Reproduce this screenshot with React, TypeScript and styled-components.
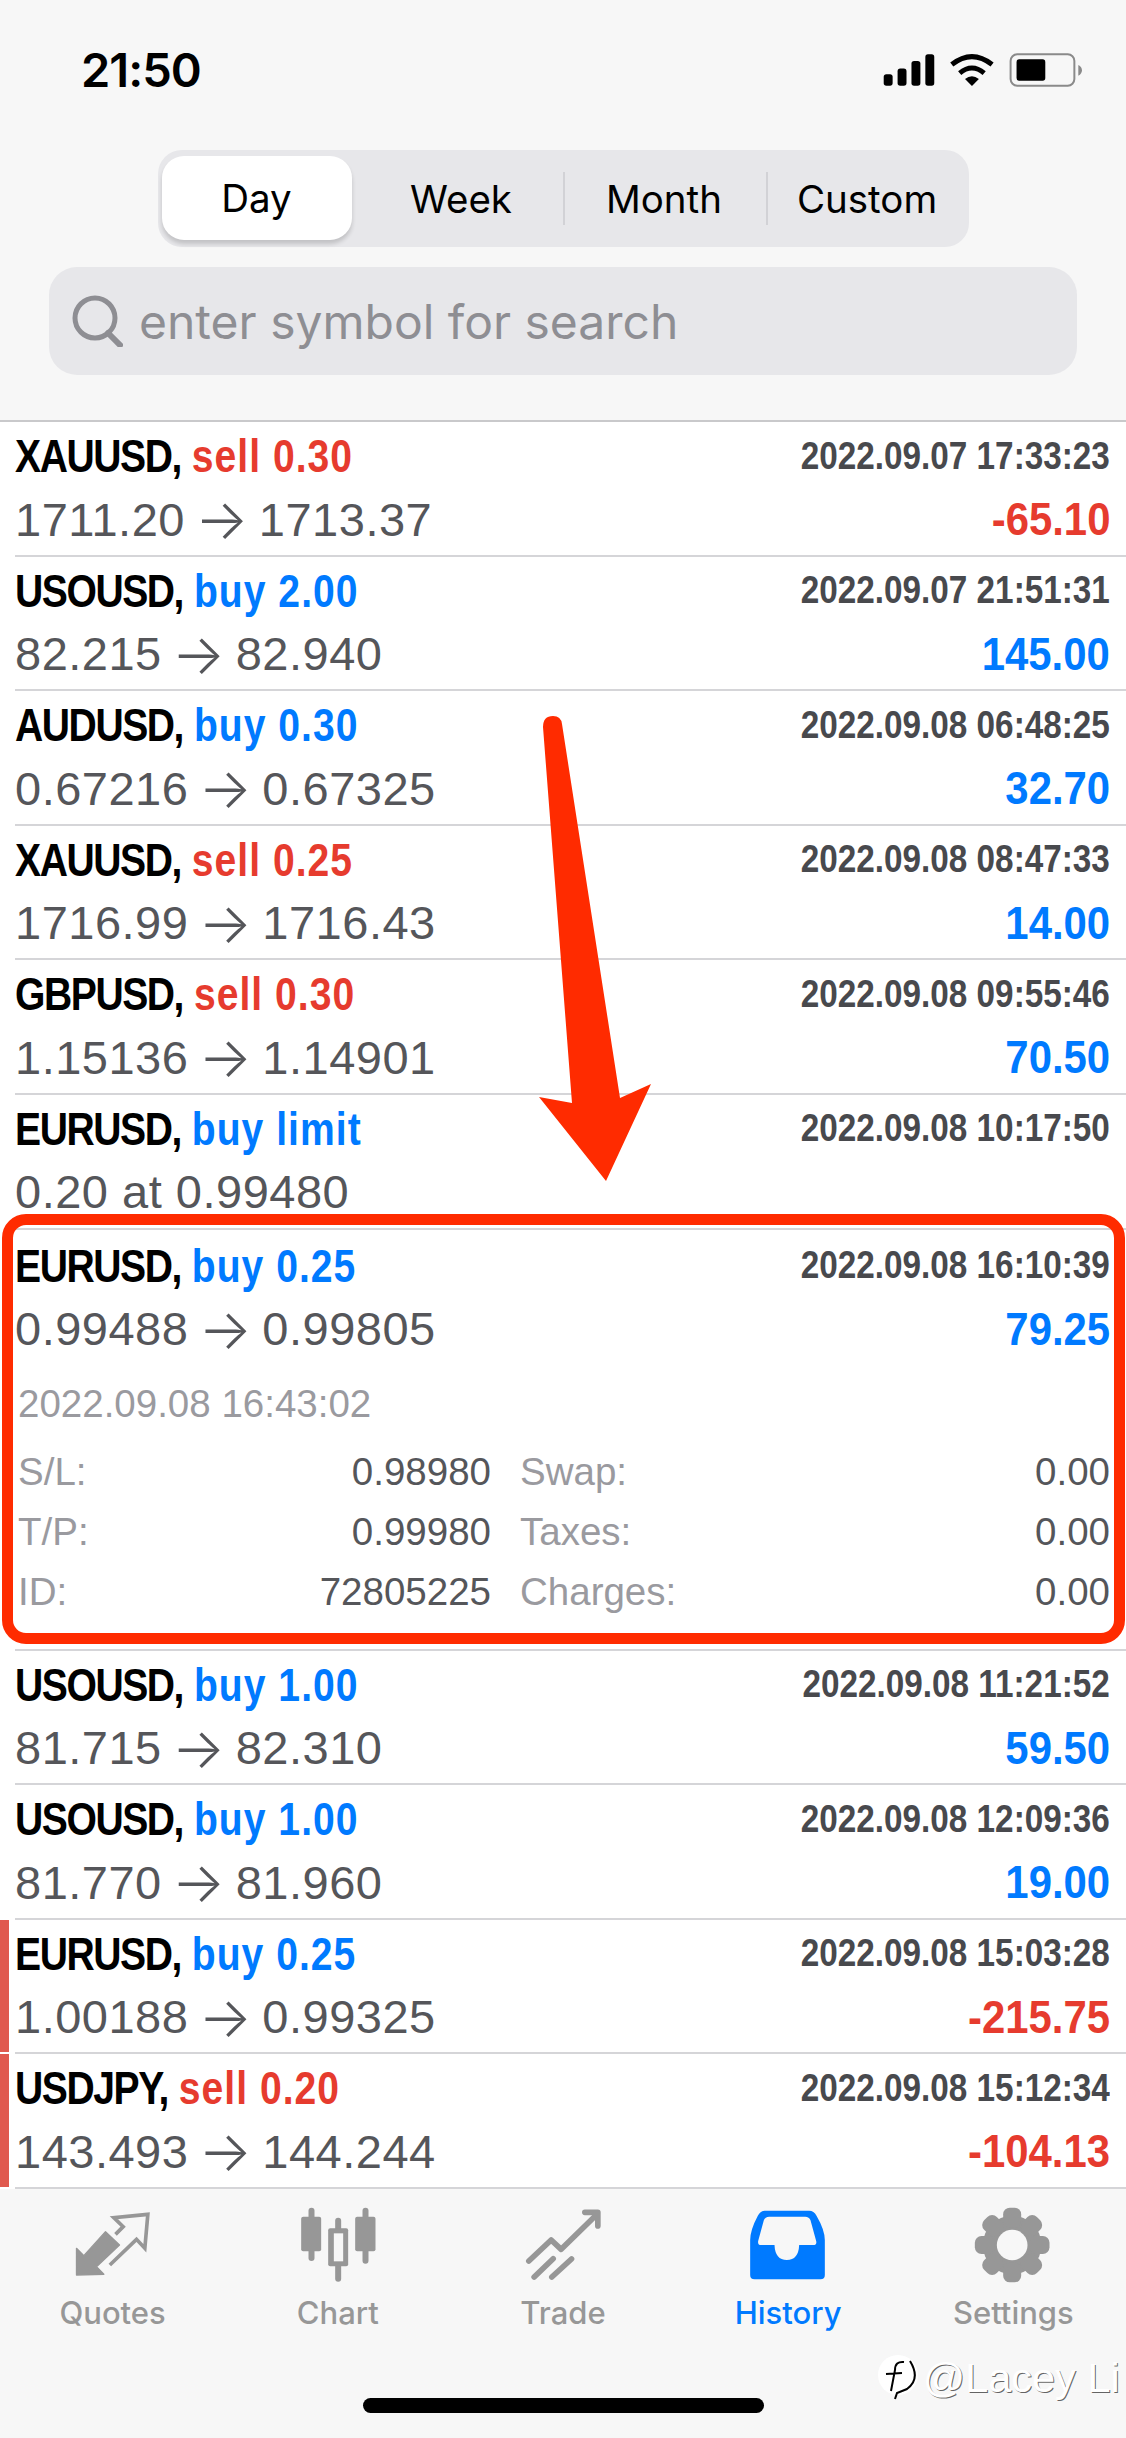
import React from "react";
import styled, { createGlobalStyle } from "styled-components";

const GlobalStyle = createGlobalStyle`
    html, body {
        margin: 0;
        padding: 0;
        background: #f7f7f7;
    }
    * {
        box-sizing: border-box;
    }
`

const Page = styled.div`
    position: relative;
    width: 1126px;
    height: 2438px;
    overflow: hidden;
    background: #f7f7f7;
    font-family: "Liberation Sans", Arial, sans-serif;
`

const Header = styled.header`
    height: 422px;
    border-bottom: 2px solid #c9c9cb;
    display: flex;
    flex-direction: column;
    align-items: center;
`

const StatusBar = styled.div`
    width: 100%;
    height: 139px;
    margin-bottom: 11px;
    padding: 0 39px 0 81px;
    display: flex;
    align-items: center;
    justify-content: space-between;
`

const Clock = styled.span`
    font-family: Inter, sans-serif;
    font-size: 47px;
    font-weight: 600;
    letter-spacing: -1px;
    color: #000;
`

const Segmented = styled.div`
    width: 811px;
    height: 97px;
    display: flex;
    background: #e7e7ea;
    border-radius: 24px;
`

const Segment = styled.div<{ $active?: boolean; $divider?: boolean }>`
    position: relative;
    flex: ${p => (p.$active ? "0 0 190px" : "1")};
    display: flex;
    align-items: center;
    justify-content: center;
    font-family: Inter, sans-serif;
    font-size: 38.5px;
    color: #000;
    margin: ${p => (p.$active ? "6px 8px 7px 4px" : "0")};
    background: ${p => (p.$active ? "#fff" : "transparent")};
    border-radius: 22px;
    box-shadow: ${p => (p.$active ? "0 4px 4px rgba(0,0,0,0.16)" : "none")};

    &::before {
        content: "";
        display: ${p => (p.$divider ? "block" : "none")};
        position: absolute;
        left: 0;
        top: 22px;
        height: 53px;
        width: 2px;
        background: #d2d2d6;
    }
`

const SearchBox = styled.div`
    width: 1028px;
    height: 108px;
    margin-top: 20px;
    padding-left: 22px;
    display: flex;
    align-items: center;
    gap: 16px;
    background: #e7e7ea;
    border-radius: 28px;
`

const SearchText = styled.span`
    font-family: Inter, sans-serif;
    font-size: 48px;
    color: #8e8e93;
`

const List = styled.div`
    background: #fff;
`

const Row = styled.div<{ $expanded?: boolean }>`
    display: flex;
    height: ${p => (p.$expanded ? "421px" : "134.6px")};
`

const Accent = styled.div<{ $on?: boolean }>`
    width: 9px;
    flex-shrink: 0;
    background: ${p => (p.$on ? "#e0594e" : "transparent")};
    border-bottom: 2px solid ${p => (p.$on ? "#fff" : "transparent")};
`

const RowBody = styled.div`
    flex: 1;
    margin-left: 6px;
    padding-right: 16px;
    border-bottom: 2px solid #d5d5d8;
`

const TopLine = styled.div<{ $expanded?: boolean }>`
    height: ${p => (p.$expanded ? "72px" : "68px")};
    display: flex;
    align-items: center;
    justify-content: space-between;
`

const SubLine = styled.div<{ $expanded?: boolean }>`
    height: 58px;
    margin-top: ${p => (p.$expanded ? "-2px" : "0")};
    display: flex;
    align-items: center;
    justify-content: space-between;
`

const Title = styled.div`
    font-size: 46px;
    font-weight: 700;
    white-space: nowrap;
    transform: scaleX(0.85);
    transform-origin: left center;
`

const Symbol = styled.span`
    color: #000;
    letter-spacing: -1.7px;
`

const Action = styled.span<{ $side: "buy" | "sell" }>`
    letter-spacing: 1.2px;
    color: ${p => (p.$side === "buy" ? "#007aff" : "#e63b2e")};
`

const OpenTime = styled.div`
    font-size: 38px;
    font-weight: 700;
    color: #48494d;
    white-space: nowrap;
    transform: scaleX(0.876);
    transform-origin: right center;
`

const Prices = styled.div`
    display: flex;
    align-items: center;
    font-size: 47px;
    letter-spacing: 0.5px;
    color: #55565a;
    white-space: nowrap;
`

const PriceArrow = styled.span`
    margin: 0 10px;
    font-family: Inter, sans-serif;
    font-size: 56px;
    font-weight: 300;
    line-height: 1;
`

const Profit = styled.div<{ $negative?: boolean }>`
    font-size: 46px;
    font-weight: 700;
    color: ${p => (p.$negative ? "#e63b2e" : "#007aff")};
    transform: scaleX(0.91);
    transform-origin: right center;
`

const CloseTime = styled.div`
    height: 60px;
    margin-top: 16px;
    margin-left: 3px;
    display: flex;
    align-items: center;
    font-size: 38.5px;
    color: #9a9a9f;
`

const Details = styled.div`
    margin-top: 8px;
    margin-left: 3px;
    display: grid;
    grid-template-columns: 473px 1fr;
    column-gap: 29px;
`

const DetailCell = styled.div`
    height: 60px;
    display: flex;
    align-items: center;
    justify-content: space-between;
    font-size: 38.5px;
`

const DetailLabel = styled.span`
    color: #9a9a9f;
`

const DetailValue = styled.span`
    color: #55565a;
`

const TabBar = styled.nav`
    display: grid;
    grid-template-columns: repeat(5, 225.2px);
    padding-top: 16px;
`

const Tab = styled.div<{ $active?: boolean }>`
    display: flex;
    flex-direction: column;
    align-items: center;
    color: ${p => (p.$active ? "#007aff" : "#979797")};
`

const TabLabel = styled.span`
    margin-top: 10px;
    height: 36px;
    line-height: 36px;
    font-family: Inter, sans-serif;
    font-size: 31px;
    font-weight: 500;
`

const HomeIndicator = styled.div`
    width: 401px;
    height: 15px;
    margin: 67px auto 0;
    background: #000;
    border-radius: 8px;
`

const Frame = styled.div`
    position: absolute;
    left: 2px;
    top: 1214px;
    width: 1123px;
    height: 430px;
    border: 11px solid #ff2b00;
    border-radius: 24px;
`

const ArrowMark = styled.svg`
    position: absolute;
    left: 530px;
    top: 710px;
`

const Watermark = styled.div`
    position: absolute;
    left: 877px;
    top: 2354px;
    display: flex;
    align-items: center;
    gap: 2px;
    font-size: 41.5px;
    color: #fff;
    text-shadow: 1px 1px 0 rgba(0, 0, 0, 0.6);
    white-space: nowrap;
`

type Trade = {
    symbol: string;
    side: "buy" | "sell";
    action: string;
    time: string;
    from?: string;
    to?: string;
    note?: string;
    profit?: string;
    negative?: boolean;
    accent?: boolean;
    expanded?: boolean;
}

const trades: Trade[] = [
    { symbol: "XAUUSD", side: "sell", action: "sell 0.30", time: "2022.09.07 17:33:23", from: "1711.20", to: "1713.37", profit: "-65.10", negative: true },
    { symbol: "USOUSD", side: "buy", action: "buy 2.00", time: "2022.09.07 21:51:31", from: "82.215", to: "82.940", profit: "145.00" },
    { symbol: "AUDUSD", side: "buy", action: "buy 0.30", time: "2022.09.08 06:48:25", from: "0.67216", to: "0.67325", profit: "32.70" },
    { symbol: "XAUUSD", side: "sell", action: "sell 0.25", time: "2022.09.08 08:47:33", from: "1716.99", to: "1716.43", profit: "14.00" },
    { symbol: "GBPUSD", side: "sell", action: "sell 0.30", time: "2022.09.08 09:55:46", from: "1.15136", to: "1.14901", profit: "70.50" },
    { symbol: "EURUSD", side: "buy", action: "buy limit", time: "2022.09.08 10:17:50", note: "0.20 at 0.99480" },
    { symbol: "EURUSD", side: "buy", action: "buy 0.25", time: "2022.09.08 16:10:39", from: "0.99488", to: "0.99805", profit: "79.25", expanded: true },
    { symbol: "USOUSD", side: "buy", action: "buy 1.00", time: "2022.09.08 11:21:52", from: "81.715", to: "82.310", profit: "59.50" },
    { symbol: "USOUSD", side: "buy", action: "buy 1.00", time: "2022.09.08 12:09:36", from: "81.770", to: "81.960", profit: "19.00" },
    { symbol: "EURUSD", side: "buy", action: "buy 0.25", time: "2022.09.08 15:03:28", from: "1.00188", to: "0.99325", profit: "-215.75", negative: true, accent: true },
    { symbol: "USDJPY", side: "sell", action: "sell 0.20", time: "2022.09.08 15:12:34", from: "143.493", to: "144.244", profit: "-104.13", negative: true, accent: true },
];

const details = [
    ["S/L:", "0.98980"],
    ["Swap:", "0.00"],
    ["T/P:", "0.99980"],
    ["Taxes:", "0.00"],
    ["ID:", "72805225"],
    ["Charges:", "0.00"],
];

const StatusIcons = () => (
    <svg width="207" height="38" viewBox="30 30 620 115">
        <rect x="38" y="100" width="27" height="35" rx="8" fill="#000" />
        <rect x="80" y="83" width="27" height="52" rx="8" fill="#000" />
        <rect x="122" y="60" width="27" height="75" rx="8" fill="#000" />
        <rect x="164" y="40" width="27" height="95" rx="8" fill="#000" />
        <path d="M244 71 Q305 23 366 71" fill="none" stroke="#000" strokeWidth="15" />
        <path d="M268 97 Q305 66 342 97" fill="none" stroke="#000" strokeWidth="15" />
        <path d="M284 115 Q305 98 326 115 L305 136 Z" fill="#000" />
        <rect x="422" y="40" width="193" height="95" rx="20" fill="none" stroke="#8a8a8a" strokeWidth="6" />
        <rect x="440" y="55" width="87" height="65" rx="8" fill="#000" />
        <path d="M627 72 Q638 78 638 88 Q638 98 627 105 Z" fill="#8a8a8a" />
    </svg>
)

const SearchIcon = () => (
    <svg width="52" height="52" viewBox="0 0 52 52">
        <circle cx="24" cy="23" r="20" fill="none" stroke="#8e8e93" strokeWidth="5" />
        <line x1="37" y1="38" x2="49" y2="50" stroke="#8e8e93" strokeWidth="6" strokeLinecap="round" />
    </svg>
)

const QuotesIcon = () => (
    <svg width="100" height="80" viewBox="37.5 30 300 240">
        <path d="M78 240 L78 160 L100 182 L165 110 L207 150 L138 215 L160 238 Z" fill="#979797" strokeLinejoin="round" stroke="#979797" strokeWidth="4" />
        <path d="M195 118 L218 95 L190 68 L292 58 L283 160 L258 133 L178 210" fill="none" stroke="#979797" strokeWidth="11" />
    </svg>
)

const ChartIcon = () => (
    <svg width="100" height="80" viewBox="712.5 30 300 240">
        <rect x="774" y="38" width="18" height="160" rx="9" fill="#979797" />
        <rect x="752" y="65" width="60" height="104" rx="6" fill="#979797" />
        <rect x="854" y="68" width="18" height="192" rx="9" fill="#979797" />
        <rect x="833" y="100" width="60" height="114" rx="6" fill="#979797" />
        <rect x="850" y="115" width="28" height="84" fill="#f7f7f7" />
        <rect x="936" y="38" width="18" height="168" rx="9" fill="#979797" />
        <rect x="914" y="65" width="61" height="104" rx="6" fill="#979797" />
    </svg>
)

const TradeIcon = () => (
    <svg width="100" height="80" viewBox="37.5 30 300 240">
        <g fill="none" stroke="#979797" strokeWidth="17" strokeLinecap="round" strokeLinejoin="round">
            <path d="M85 198 L152 135 L182 163 L285 62" />
            <path d="M253 52 L292 52 L292 93" />
            <path d="M101 246 L158 191" />
            <path d="M154 246 L213 192" />
        </g>
    </svg>
)

const HistoryIcon = () => (
    <svg width="100" height="80" viewBox="712.5 30 300 240">
        <path
            fillRule="evenodd"
            fill="#007aff"
            d="M792 47 L926 47 Q940 47 948 62 Q973 105 973 135 L973 240 Q973 253 960 253 L762 253 Q749 253 749 240 L749 135 Q749 105 772 62 Q780 47 792 47 Z M806 65 Q794 65 790 76 L773 138 Q771 150 782 150 L822 150 Q824 195 859 195 Q894 195 896 150 L938 150 Q950 150 947 138 L930 76 Q926 65 914 65 Z"
        />
    </svg>
)

const SettingsIcon = () => (
    <svg width="100" height="80" viewBox="37.5 30 300 240">
        <g fill="#979797">
            <circle cx="185" cy="150" r="88" />
            {[0, 45, 90, 135, 180, 225, 270, 315].map(angle => (
                <rect key={angle} x="158" y="38" width="54" height="60" rx="20" transform={`rotate(${angle} 185 150)`} />
            ))}
        </g>
        <circle cx="185" cy="150" r="46" fill="#f7f7f7" />
    </svg>
)

const tabs = [
    { label: "Quotes", icon: <QuotesIcon /> },
    { label: "Chart", icon: <ChartIcon /> },
    { label: "Trade", icon: <TradeIcon /> },
    { label: "History", icon: <HistoryIcon />, active: true },
    { label: "Settings", icon: <SettingsIcon /> },
];

export default function App() {
    return (
        <Page>
            <GlobalStyle />
            <Header>
                <StatusBar>
                    <Clock>21:50</Clock>
                    <StatusIcons />
                </StatusBar>
                <Segmented>
                    <Segment $active>Day</Segment>
                    <Segment>Week</Segment>
                    <Segment $divider>Month</Segment>
                    <Segment $divider>Custom</Segment>
                </Segmented>
                <SearchBox>
                    <SearchIcon />
                    <SearchText>enter symbol for search</SearchText>
                </SearchBox>
            </Header>
            <List>
                {trades.map((t, i) => (
                    <Row key={i} $expanded={t.expanded}>
                        <Accent $on={t.accent} />
                        <RowBody>
                            <TopLine $expanded={t.expanded}>
                                <Title>
                                    <Symbol>{t.symbol},</Symbol> <Action $side={t.side}>{t.action}</Action>
                                </Title>
                                <OpenTime>{t.time}</OpenTime>
                            </TopLine>
                            <SubLine $expanded={t.expanded}>
                                {t.note ? (
                                    <Prices>{t.note}</Prices>
                                ) : (
                                    <Prices>
                                        {t.from}
                                        <PriceArrow>→</PriceArrow>
                                        {t.to}
                                    </Prices>
                                )}
                                {t.profit && <Profit $negative={t.negative}>{t.profit}</Profit>}
                            </SubLine>
                            {t.expanded && (
                                <>
                                    <CloseTime>2022.09.08 16:43:02</CloseTime>
                                    <Details>
                                        {details.map(([label, value]) => (
                                            <DetailCell key={label}>
                                                <DetailLabel>{label}</DetailLabel>
                                                <DetailValue>{value}</DetailValue>
                                            </DetailCell>
                                        ))}
                                    </Details>
                                </>
                            )}
                        </RowBody>
                    </Row>
                ))}
            </List>
            <TabBar>
                {tabs.map(tab => (
                    <Tab key={tab.label} $active={tab.active}>
                        {tab.icon}
                        <TabLabel>{tab.label}</TabLabel>
                    </Tab>
                ))}
            </TabBar>
            <HomeIndicator />
            <Frame />
            <ArrowMark width="130" height="480" viewBox="530 710 130 480">
                <path d="M543 727 Q543 716 553 716 Q561 716 562 724 L620 1098 L651 1084 L606 1181 L539 1097 L572 1103 Z" fill="#ff2b00" />
            </ArrowMark>
            <Watermark>
                <svg width="44" height="46" viewBox="0 0 44 46">
                    <circle cx="21" cy="20" r="20" fill="#fff" />
                    <path d="M27 7 Q18 6 18 15 L14 36 M9 19 L25 18" fill="none" stroke="#000" strokeWidth="2" />
                    <path d="M33 6 Q44 24 30 34 L20 38 L18 44" fill="none" stroke="#000" strokeWidth="2" />
                </svg>
                <span>@Lacey Li</span>
            </Watermark>
        </Page>
    )
}
